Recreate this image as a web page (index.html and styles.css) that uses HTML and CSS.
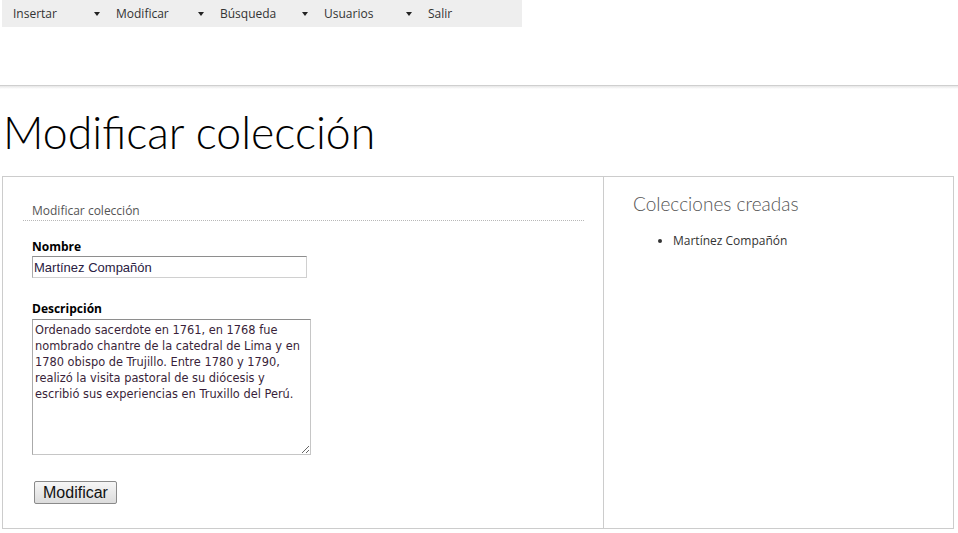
FILE: index.html
```html
<!DOCTYPE html>
<html lang="es">
<head>
<meta charset="utf-8">
<title>Modificar colección</title>
<link rel="stylesheet" href="styles.css">
</head>
<body>
<nav class="menu">
  <ul>
    <li><span>Insertar</span><i class="caret"></i></li>
    <li><span>Modificar</span><i class="caret"></i></li>
    <li><span>Búsqueda</span><i class="caret"></i></li>
    <li><span>Usuarios</span><i class="caret"></i></li>
    <li><span>Salir</span></li>
  </ul>
</nav>
<div class="rule"></div>
<h1 class="title">Modificar colección</h1>
<div class="panel">
  <section class="main-col">
    <form class="form">
      <div class="legend">Modificar colección</div>
      <label class="label">Nombre</label>
      <input class="text-input" type="text" value="Martínez Compañón">
      <label class="label label-desc">Descripción</label>
      <textarea class="text-area">Ordenado sacerdote en 1761, en 1768 fue nombrado chantre de la catedral de Lima y en 1780 obispo de Trujillo. Entre 1780 y 1790, realizó la visita pastoral de su diócesis y escribió sus experiencias en Truxillo del Perú.</textarea>
      <div class="actions"><button type="button" class="btn">Modificar</button></div>
    </form>
  </section>
  <aside class="side-col">
    <h2 class="side-title">Colecciones creadas</h2>
    <ul class="list">
      <li>Martínez Compañón</li>
    </ul>
  </aside>
</div>
</body>
</html>
```

FILE: styles.css
```css
* { box-sizing: border-box; }
html, body { margin: 0; padding: 0; background: #fff; }
body {
  font-family: "Open Sans", "DejaVu Sans", sans-serif;
  font-size: 12px;
  color: #222;
  width: 958px;
  height: 533px;
  overflow: hidden;
}
.menu {
  margin-left: 2px;
  width: 520px;
  height: 27px;
  background: #eeeeee;
}
.menu ul {
  list-style: none;
  margin: 0;
  padding: 0;
  display: flex;
  height: 27px;
}
.menu li {
  width: 104px;
  display: flex;
  align-items: center;
  padding-left: 11px;
  color: #333;
  font-size: 12px;
  position: relative;
}
.menu li:nth-child(n+2) { padding-left: 10px; }
.caret {
  position: absolute;
  left: 92px;
  top: 12px;
  width: 0;
  height: 0;
  border-left: 3.5px solid transparent;
  border-right: 3.5px solid transparent;
  border-top: 4px solid #222;
}
.rule {
  margin-top: 58px;
  height: 4px;
  border-top: 1px solid #cfcfcf;
  background: linear-gradient(#e6e6e6, #fff);
}
.title {
  margin: 15px 0 0 3px;
  font-family: "Lato", sans-serif;
  font-weight: 300;
  font-size: 44.6px;
  line-height: 56px;
  color: #000;
  letter-spacing: 0;
}
.panel {
  margin: 16px 0 0 2px;
  width: 952px;
  height: 353px;
  border: 1px solid #cccccc;
  display: flex;
}
.main-col {
  width: 601px;
  border-right: 1px solid #cccccc;
  padding: 0 19px 0 20px;
}
.form {
  display: flex;
  flex-direction: column;
  align-items: flex-start;
  padding-top: 25px;
}
.legend {
  align-self: stretch;
  padding: 0 0 1px 9px;
  border-bottom: 1px dotted #b8b8b8;
  color: #555;
  font-size: 12px;
  line-height: 17px;
}
.label {
  margin: 18px 0 0 9px;
  font-weight: bold;
  color: #000;
  font-size: 12px;
  line-height: 16px;
}
.label-desc { margin-top: 23px; }
.text-input {
  margin: 1px 0 0 9px;
  width: 275px;
  height: 22px;
  border: 1px solid #aaa;
  border-color: #8e8e8e #d0d0d0 #d0d0d0 #aaaaaa;
  padding: 1px 1px;
  font-family: "Liberation Sans", Arial, sans-serif;
  font-size: 13px;
  color: #2a2142;
}
.text-area {
  margin: 2px 0 0 9px;
  width: 279px;
  height: 136px;
  border: 1px solid #aaa;
  border-color: #8e8e8e #c6c6c6 #c6c6c6 #aaaaaa;
  padding: 2px 2px;
  font-family: "DejaVu Sans", Verdana, sans-serif;
  font-size: 11.4px;
  line-height: 16px;
  color: #3a1f3a;
  resize: both;
}
.actions { margin: 26px 0 0 11px; }
.btn {
  font-family: "Liberation Sans", Arial, sans-serif;
  font-size: 16px;
  color: #111;
  height: 23px;
  padding: 0 8px;
  border: 1px solid #8a8a8a;
  border-radius: 2px;
  background: linear-gradient(#f6f6f6, #dcdcdc);
}
.side-col {
  flex: 1;
  padding: 15px 0 0 29px;
}
.side-title {
  margin: 0;
  font-family: "Lato", sans-serif;
  font-weight: 300;
  font-size: 19px;
  line-height: 24px;
  color: #555;
}
.list {
  margin: 16px 0 0;
  padding-left: 40px;
  color: #333;
  font-size: 12px;
  line-height: 17px;
}
```
